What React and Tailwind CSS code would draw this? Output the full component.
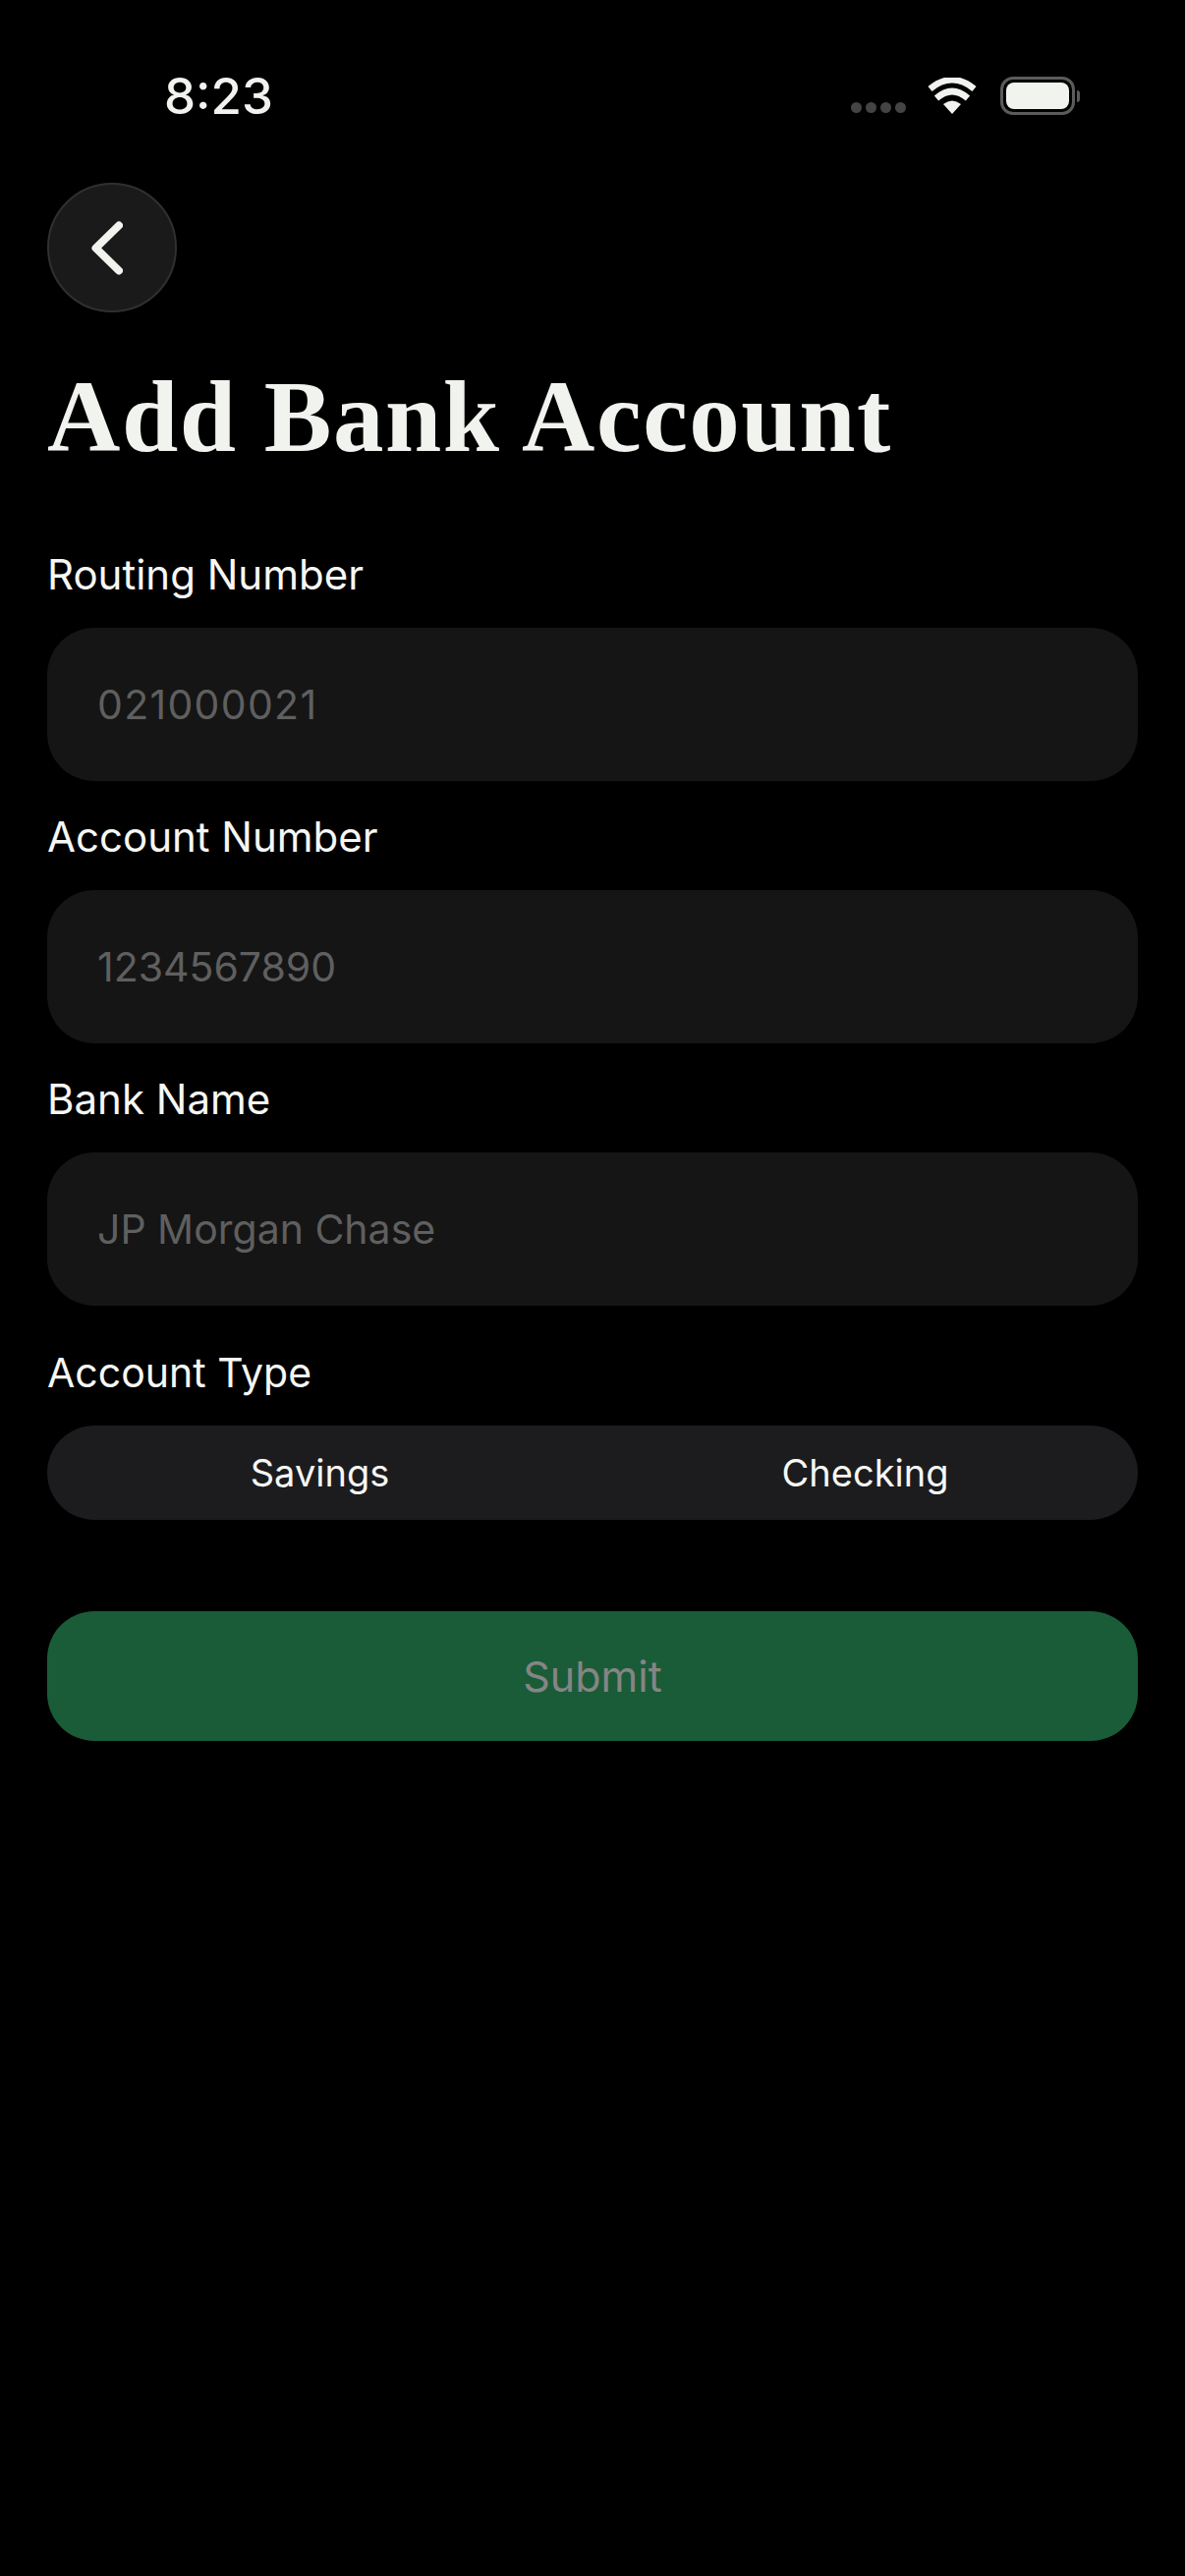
import React from 'react';

const fields = [
  { label: 'Routing Number', placeholder: '021000021', spacing: 'tracking-[1.3px]' },
  { label: 'Account Number', placeholder: '1234567890', spacing: '' },
  { label: 'Bank Name', placeholder: 'JP Morgan Chase', spacing: '' },
];

const StatusBar = () => (
  <div className="flex h-[186px] items-start justify-between pl-[167px] pr-[107px] pt-[70px]">
    <span className="text-[51px] font-medium leading-[56px] text-[#f1f3ef]">8:23</span>
    <div className="flex items-center pt-[8px]">
      <div className="mt-[24px] flex gap-[4px]">
        <span className="h-[11px] w-[11px] rounded-full bg-[#444444]" />
        <span className="h-[11px] w-[11px] rounded-full bg-[#444444]" />
        <span className="h-[11px] w-[11px] rounded-full bg-[#444444]" />
        <span className="h-[11px] w-[11px] rounded-full bg-[#444444]" />
      </div>
      <svg className="ml-[22px]" width="50" height="38" viewBox="0 0 50 38" fill="none">
        <path d="M25 37 L16 27 Q25 20 34 27 Z" fill="#f1f3ef" />
        <path d="M9 21 Q25 7 41 21" stroke="#f1f3ef" strokeWidth="6.5" />
        <path d="M2.5 11.5 Q25 -7 47.5 11.5" stroke="#f1f3ef" strokeWidth="6.5" />
      </svg>
      <div className="ml-[24px] flex items-center">
        <div className="flex h-[39px] w-[76px] rounded-[13px] border-[3px] border-[#5a5c5a] p-[3px]">
          <div className="flex-1 rounded-[8px] bg-[#f1f3ef]" />
        </div>
        <div className="ml-[2px] h-[12px] w-[3px] rounded-r-full bg-[#5a5c5a]" />
      </div>
    </div>
  </div>
);

const Field = ({ label, placeholder, spacing }) => (
  <div className="flex flex-col">
    <label className="mb-[30px] text-[42px] leading-[48px] text-[#f6f7f5]">{label}</label>
    <div className="flex h-[156px] items-center rounded-[48px] bg-[#151515] pb-[0px] pl-[51px] pt-[2px]">
      <span className={`text-[41px] text-[#5f5f5f] ${spacing}`}>{placeholder}</span>
    </div>
  </div>
);

export default function App() {
  return (
    <div className="min-h-[2622px] w-[1206px] bg-black font-['Inter',sans-serif]">
      <StatusBar />
      <div className="px-[48px]">
        <button className="flex h-[132px] w-[132px] items-center justify-center rounded-full border-2 border-[#303030] bg-[#1a1a1a]">
          <svg width="32" height="55" viewBox="0 0 32 55" fill="none" className="mr-[10px]">
            <path d="M28 4.5 L4.5 27.5 L28 50.5" stroke="#f1f3ef" strokeWidth="8" strokeLinecap="round" strokeLinejoin="round" />
          </svg>
        </button>
        <h1 className="mt-[46px] font-['Liberation_Serif',serif] text-[103px] font-bold leading-[120px] tracking-[1.5px] text-[#f1f3ef]">
          Add Bank Account
        </h1>
        <div className="mt-[77px] flex flex-col gap-[33px]">
          {fields.map((f) => (
            <Field key={f.label} label={f.label} placeholder={f.placeholder} spacing={f.spacing} />
          ))}
        </div>
        <div className="mt-[44px] text-[41px] leading-[48px] text-[#f6f7f5]">Account Type</div>
        <div className="mt-[30px] grid h-[96px] grid-cols-2 items-center rounded-[48px] bg-[#1c1c1e] text-center text-[38px] text-[#f6f7f5]">
          <span>Savings</span>
          <span>Checking</span>
        </div>
        <button className="mt-[93px] h-[132px] w-full rounded-[48px] bg-[#1a5c38] text-[43px] text-[#858585]">
          Submit
        </button>
      </div>
    </div>
  );
}
